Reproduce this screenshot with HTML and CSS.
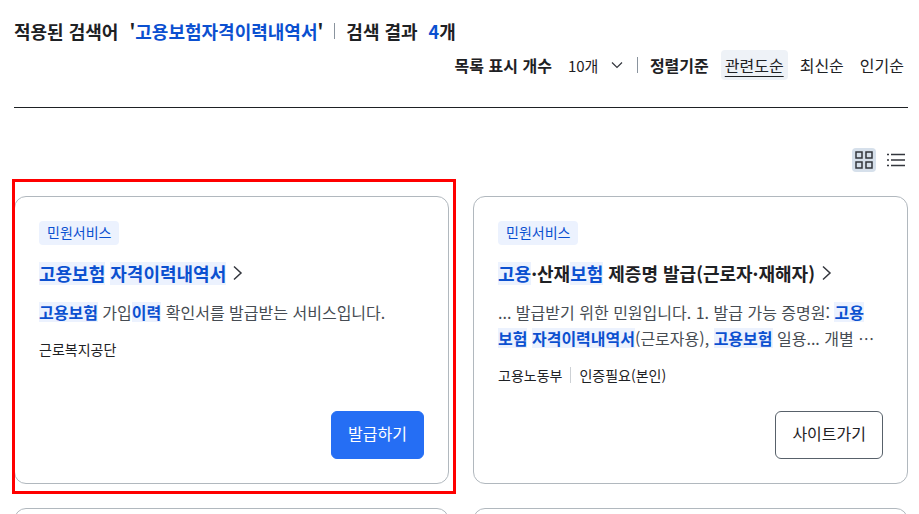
FILE: index.html
```html
<!DOCTYPE html>
<html lang="ko">
<head>
    <meta charset="UTF-8">
    <meta name="viewport" content="width=device-width, initial-scale=1.0">
    <title>검색 결과</title>
    <link rel="stylesheet" href="styles.css">
</head>
<body>

    <main class="search-result">
        <header class="result-head">
            <div class="summary">
                <span>적용된 검색어</span>
                <span class="keyword">'<em>고용보험자격이력내역서</em>'</span>
                <span class="bar"></span>
                <span>검색 결과</span>
                <span class="count"><em>4</em>개</span>
            </div>
            <div class="options">
                <label for="page-size">목록 표시 개수</label>
                <div class="select">
                    <select id="page-size">
                        <option>10개</option>
                        <option>20개</option>
                        <option>30개</option>
                    </select>
                    <svg width="12" height="8" viewBox="0 0 12 8"><path d="M1 1.5l5 5 5-5" /></svg>
                </div>
                <span class="bar"></span>
                <strong>정렬기준</strong>
                <div class="sort">
                    <button type="button" class="active">관련도순</button>
                    <button type="button">최신순</button>
                    <button type="button">인기순</button>
                </div>
            </div>
        </header>

        <div class="view-type">
            <button type="button" class="active" aria-label="카드형 보기">
                <svg width="20" height="20" viewBox="0 0 20 20">
                    <path d="M2 2h6v6H2zM12 2h6v6h-6zM2 12h6v6H2zM12 12h6v6h-6z" />
                </svg>
            </button>
            <button type="button" aria-label="목록형 보기">
                <svg width="20" height="20" viewBox="0 0 20 20">
                    <path d="M1 4.5h2M5 4.5h14M1 10h2M5 10h14M1 15.5h2M5 15.5h14" />
                </svg>
            </button>
        </div>

        <ul class="card-list">
            <li class="focused">
                <article class="card">
                    <span class="badge">민원서비스</span>
                    <h3>
                        <a href="#"><mark>고용보험</mark> <mark>자격이력내역서</mark></a>
                        <svg width="10" height="16" viewBox="0 0 10 16"><path d="M1 1.5L8 8l-7 6.5" /></svg>
                    </h3>
                    <p class="desc"><mark>고용보험</mark> 가입<mark>이력</mark> 확인서를 발급받는 서비스입니다.</p>
                    <div class="info">
                        <span>근로복지공단</span>
                    </div>
                    <button type="button" class="btn primary">발급하기</button>
                </article>
            </li>
            <li>
                <article class="card">
                    <span class="badge">민원서비스</span>
                    <h3>
                        <a href="#"><mark>고용</mark>·산재<mark>보험</mark> 제증명 발급(근로자·재해자)</a>
                        <svg width="10" height="16" viewBox="0 0 10 16"><path d="M1 1.5L8 8l-7 6.5" /></svg>
                    </h3>
                    <p class="desc">... 발급받기 위한 민원입니다. 1. 발급 가능 증명원: <mark>고용보험</mark> <mark>자격이력내역서</mark>(근로자용), <mark>고용보험</mark> 일용... 개별 …</p>
                    <div class="info">
                        <span>고용노동부</span>
                        <span>인증필요(본인)</span>
                    </div>
                    <button type="button" class="btn">사이트가기</button>
                </article>
            </li>
            <li><article class="card"></article></li>
            <li><article class="card"></article></li>
        </ul>
    </main>

</body>
</html>
```
FILE: styles.css
```css
* {
    box-sizing: border-box;
}

body {
    margin: 0;
    background-color: #fff;
    color: #1e2124;
    font-family: "Noto Sans CJK KR", sans-serif;
    font-size: 16px;
    line-height: 24px;
}

button,
select {
    padding: 0;
    border: 0;
    background: none;
    color: inherit;
    font-family: inherit;
    font-size: 16px;
    cursor: pointer;
}

svg {
    fill: none;
    stroke: #33363d;
    stroke-width: 1.5;
}

.search-result {
    padding: 17px 11px 24px 14px;
}

/* search summary and list options */
.result-head {
    padding-bottom: 26px;
    border-bottom: 1px solid #1e2124;
}

.summary {
    display: flex;
    align-items: center;
    gap: 11px;
    height: 28px;
    font-size: 18px;
    font-weight: 700;
}

.summary em {
    color: #0b50d0;
    font-style: normal;
}

.bar {
    width: 1px;
    height: 16px;
    background-color: #8a949e;
}

.options {
    display: flex;
    justify-content: flex-end;
    align-items: center;
    gap: 12px;
    height: 32px;
    margin-top: 4px;
}

.options label,
.options strong {
    font-weight: 700;
}

.select {
    display: flex;
    align-items: center;
    gap: 12px;
    padding: 0 2px 0 4px;
}

.select select {
    appearance: none;
    font-size: 15px;
}

.select svg {
    stroke-width: 1.2;
}

.sort {
    display: flex;
    gap: 8px;
}

.sort button {
    height: 30px;
    padding: 0 4px;
    border-radius: 4px;
}

.sort .active {
    background-color: #eef2f7;
    text-decoration: underline;
    text-underline-offset: 4px;
}

/* card / list switch */
.view-type {
    display: flex;
    justify-content: flex-end;
    gap: 8px;
    margin: 40px 0 24px;
}

.view-type button {
    display: flex;
    justify-content: center;
    align-items: center;
    width: 24px;
    height: 24px;
    border-radius: 4px;
}

.view-type .active {
    background-color: #d6e0eb;
}

/* result cards */
.card-list {
    display: grid;
    grid-template-columns: 1fr 1fr;
    gap: 24px;
    margin: 0;
    padding: 0;
    list-style: none;
}

.card-list li {
    position: relative;
}

.focused::after {
    content: "";
    position: absolute;
    inset: -17px -7px -10px -2px;
    border: 3px solid #f00;
    pointer-events: none;
}

.card {
    display: flex;
    flex-direction: column;
    align-items: flex-start;
    height: 100%;
    min-height: 288px;
    padding: 24px;
    border: 1px solid #b1b8be;
    border-radius: 12px;
}

.badge {
    padding: 0 8px 2px;
    border-radius: 4px;
    background-color: #ecf2fe;
    color: #0b50d0;
    font-size: 14px;
    line-height: 22px;
}

.card h3 {
    display: flex;
    align-items: center;
    gap: 7px;
    margin: 14px 0 12px;
    font-size: 18px;
    line-height: 28px;
}

.card h3 a {
    color: inherit;
    text-decoration: none;
}

.card mark {
    background: linear-gradient(#ecf2fe, #ecf2fe) center / 100% 20px no-repeat;
    color: #0b50d0;
    font-weight: 700;
}

.card h3 mark {
    background-size: 100% 23px;
}

.desc {
    margin: 0 0 12px;
    padding-right: 8px;
    color: #464c53;
    line-height: 26px;
    word-break: break-all;
}

.info {
    display: flex;
    align-items: center;
    font-size: 14px;
}

.info span + span {
    margin-left: 8px;
    padding-left: 8px;
    border-left: 1px solid #cdd1d5;
    line-height: 16px;
}

.btn {
    height: 48px;
    margin-top: auto;
    margin-left: auto;
    padding: 0 16px 4px;
    border: 1px solid #58616a;
    border-radius: 6px;
}

.btn.primary {
    border-color: #256ef4;
    background-color: #256ef4;
    color: #fff;
}
```
